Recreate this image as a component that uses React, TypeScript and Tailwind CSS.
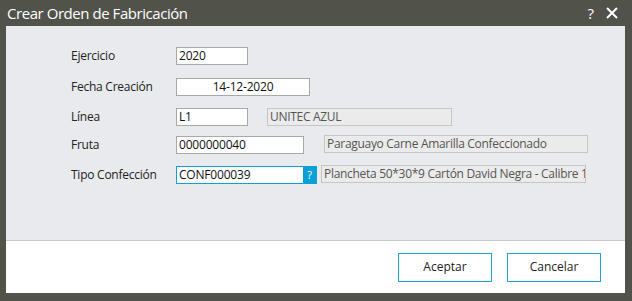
import { ReactNode } from "react";

const font = { fontFamily: "'Open Sans', 'Noto Sans', sans-serif" };

function Row({ label, children, className = "" }: { label: string; children: ReactNode; className?: string }) {
  return (
    <div className={`flex items-center ${className}`}>
      <span className="w-[105px] shrink-0 text-[12px] tracking-[-0.25px] text-[#222]">{label}</span>
      {children}
    </div>
  );
}

function Field({ value, width, center = false }: { value: string; width: string; center?: boolean }) {
  return (
    <div
      className={`flex h-[18px] items-center border border-[#a8a8a8] bg-white px-[2px] text-[12px] tracking-[-0.2px] text-[#111] ${width} ${
        center ? "justify-center" : ""
      }`}
    >
      {value}
    </div>
  );
}

function ReadOnly({ value, width }: { value: string; width: string }) {
  return (
    <div
      className={`flex h-[18px] items-center overflow-hidden whitespace-nowrap border border-[#c6c6c6] bg-[#ebebeb] px-[2px] text-[12px] tracking-[-0.3px] text-[#555] ${width}`}
    >
      {value}
    </div>
  );
}

export default function App() {
  return (
    <div className="h-[301px] w-[632px] bg-[#51524a] px-[6px] pb-[8px]" style={font}>
      <div className="flex h-[26px] items-center justify-between pr-[8px]">
        <span className="pl-[1px] text-[15px] tracking-[-0.45px] text-white">Crear Orden de Fabricación</span>
        <div className="flex items-center gap-[12px] text-white">
          <span className="text-[15px]">?</span>
          <svg width="12" height="12" viewBox="0 0 12 12">
            <path d="M1 1L11 11M11 1L1 11" stroke="white" strokeWidth="2" />
          </svg>
        </div>
      </div>
      <div className="flex h-[267px] w-[619px] flex-col bg-[#e9eaed]">
        <div className="flex h-[215px] flex-col border-b border-[#c8c8c8] pl-[65px] pt-[21px]">
          <Row label="Ejercicio">
            <Field value="2020" width="w-[72px]" />
          </Row>
          <Row label="Fecha Creación" className="mt-[13px]">
            <Field value="14-12-2020" width="w-[134px]" center />
          </Row>
          <Row label="Línea" className="mt-[12px]">
            <Field value="L1" width="w-[72px]" />
            <div className="ml-[19px]">
              <ReadOnly value="UNITEC AZUL" width="w-[185px]" />
            </div>
          </Row>
          <Row label="Fruta" className="mt-[10px]">
            <Field value="0000000040" width="w-[128px]" />
            <div className="ml-[20px] -mt-[3px]">
              <ReadOnly value="Paraguayo Carne Amarilla Confeccionado" width="w-[264px]" />
            </div>
          </Row>
          <Row label="Tipo Confección" className="mt-[12px]">
            <div className="flex h-[18px] w-[141px] items-stretch border border-[#0aa0d8] bg-white">
              <span className="flex flex-1 items-center px-[2px] text-[12px] tracking-[-0.2px] text-[#111]">
                CONF000039
              </span>
              <span className="flex w-[13px] items-center justify-center bg-[#0a9fd6] text-[11px] text-white">?</span>
            </div>
            <div className="ml-[4px] -mt-[3px]">
              <ReadOnly value="Plancheta 50*30*9 Cartón David Negra - Calibre 18" width="w-[265px]" />
            </div>
          </Row>
        </div>
        <div className="flex flex-1 items-center justify-end gap-[15px] bg-white pr-[24px]">
          <button className="h-[29px] w-[94px] border border-[#1ba6d9] bg-white text-[12px] text-[#222]">
            Aceptar
          </button>
          <button className="h-[29px] w-[94px] border border-[#1ba6d9] bg-white text-[12px] text-[#222]">
            Cancelar
          </button>
        </div>
      </div>
    </div>
  );
}
